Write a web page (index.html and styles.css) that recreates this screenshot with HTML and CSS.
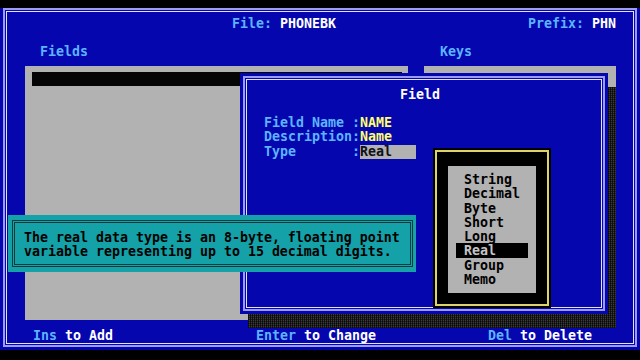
FILE: index.html
```html
<!DOCTYPE html>
<html>
<head>
<meta charset="utf-8">
<link rel="stylesheet" href="styles.css">
</head>
<body>
<div class="screen">
  <div class="frame">
    <div class="header">
      <span class="title"><span class="c">File:</span> PHONEBK</span>
      <span class="prefix"><span class="c">Prefix:</span> PHN</span>
    </div>
    <div class="labels">
      <span class="lbl-fields c">Fields</span>
      <span class="lbl-keys c">Keys</span>
    </div>
    <div class="panels">
      <div class="panel fields-panel"><div class="sel-bar"></div></div>
      <div class="panel keys-panel"></div>
    </div>
    <div class="footer">
      <span><span class="c">Ins</span> to Add</span>
      <span><span class="c">Enter</span> to Change</span>
      <span><span class="c">Del</span> to Delete</span>
    </div>
  </div>

  <div class="dialog">
    <div class="dialog-body">
      <div class="dialog-frame">
        <div class="dialog-title">Field</div>
        <div class="form">
          <div class="row"><span class="label">Field Name</span><span class="colon">:</span><span class="val">NAME</span></div>
          <div class="row"><span class="label">Description</span><span class="colon">:</span><span class="val">Name</span></div>
          <div class="row"><span class="label">Type</span><span class="colon">:</span><span class="input">Real</span></div>
        </div>
      </div>
      <div class="listbox">
        <div class="listbox-frame">
          <ul class="list">
            <li>String</li>
            <li>Decimal</li>
            <li>Byte</li>
            <li>Short</li>
            <li>Long</li>
            <li class="sel">Real</li>
            <li>Group</li>
            <li>Memo</li>
          </ul>
        </div>
      </div>
    </div>
  </div>

  <div class="tooltip">
    <div class="tooltip-inner">
      <p>The real data type is an 8-byte, floating point</p>
      <p>variable representing up to 15 decimal digits.</p>
    </div>
  </div>
</div>
</body>
</html>
```

FILE: styles.css
```css
* { box-sizing: border-box; }

html, body {
  margin: 0;
  padding: 0;
  background: #000;
  width: 640px;
  height: 360px;
  overflow: hidden;
}

body {
  font-family: "DejaVu Sans Mono", "Liberation Mono", monospace;
  font-weight: bold;
  font-size: 13.29px;
  line-height: 14.3px;
  color: #ffffff;
}

.c { color: #5cb4ff; }

.screen {
  position: relative;
  width: 640px;
  height: 342px;
  margin-top: 8px;
  background: #0606ae;
}

.frame {
  margin: 1px 3px 0;
  height: 339px;
  border: 2px solid #9c9cf6;
  box-shadow: inset 0 0 0 1px #0606ae, inset 0 0 0 2px #e2e2ff;
  display: flex;
  flex-direction: column;
}

.header {
  display: flex;
  padding-top: 7px;
  height: 21.3px;
  white-space: pre;
}
.title { margin-left: 227px; }
.prefix { margin-left: auto; margin-right: 19px; }

.labels {
  display: flex;
  margin-top: 13.7px;
  height: 14.3px;
}
.lbl-fields { margin-left: 35px; }
.lbl-keys { margin-left: 352px; }

.panels {
  display: flex;
  margin-top: 6.7px;
  height: 254px;
}
.panel { background: #b2b2b2; height: 100%; }
.fields-panel {
  margin-left: 20px;
  width: 383px;
  padding: 6px 0 0 7px;
}
.sel-bar {
  width: 370px;
  height: 14px;
  background: #050505;
}
.keys-panel {
  margin-left: 16px;
  width: 192px;
}

.footer {
  display: grid;
  grid-template-columns: 223px 232px auto;
  padding-left: 28px;
  margin-top: 9px;
  white-space: pre;
}

/* Field dialog */
.dialog {
  position: absolute;
  left: 240px;
  top: 65px;
  width: 368px;
  height: 241px;
}
.dialog::before {
  content: "";
  position: absolute;
  left: 8px;
  top: 14px;
  width: 100%;
  height: 100%;
  background:
    repeating-linear-gradient(0deg, rgba(0,0,0,0.45) 0 1px, transparent 1px 2px),
    repeating-linear-gradient(90deg, #141414 0 1px, #3a3a3a 1px 2px);
}
.dialog-body {
  position: relative;
  height: 100%;
  padding: 3px;
  background: #0606ae;
}
.dialog-frame {
  height: 100%;
  border: 2px solid #9c9cf6;
  box-shadow: inset 0 0 0 1px #0606ae, inset 0 0 0 2px #e2e2ff;
}
.dialog-title {
  padding: 9.5px 0 0 155px;
  height: 23.8px;
}
.form {
  margin-top: 14.2px;
  padding-left: 19px;
}
.row { display: flex; height: 14.3px; white-space: pre; }
.label { width: 88px; color: #5cb4ff; }
.colon { width: 8px; color: #5cb4ff; }
.val { color: #ffff70; }
.input {
  width: 56px;
  background: #b2b2b2;
  color: #101018;
}

/* List box */
.listbox {
  position: absolute;
  left: 193px;
  top: 75px;
  width: 118px;
  height: 160px;
  background: #000;
  padding: 2px;
}
.listbox-frame {
  height: 100%;
  border: 2px solid #dcd46a;
  padding: 14px 0 0 11px;
}
.list {
  list-style: none;
  margin: 0;
  width: 88px;
  height: 127px;
  background: #b2b2b2;
  padding: 6px 0 0 8px;
  color: #000;
}
.list li {
  width: 72px;
  height: 14.3px;
  padding: 1px 0 0 8px;
  line-height: 14.3px;
}
.list li.sel {
  background: #000;
  color: #c4c4c4;
}

/* Tooltip */
.tooltip {
  position: absolute;
  left: 8px;
  top: 207px;
  width: 408px;
  height: 57px;
  background: #14a2a8;
  padding: 5px 3px 5px 4px;
}
.tooltip-inner {
  height: 100%;
  border: 3px double #0a3a3c;
  padding: 8px 0 0 9px;
  color: #000;
}
.tooltip-inner p {
  margin: 0;
  white-space: pre;
}
```
